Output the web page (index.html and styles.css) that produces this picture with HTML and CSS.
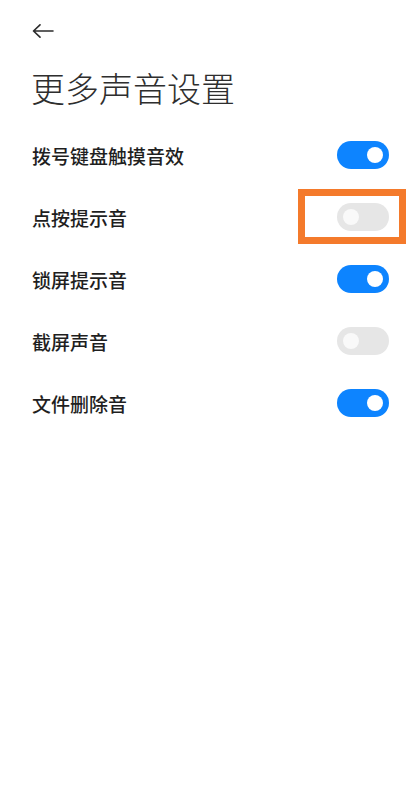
FILE: index.html
```html
<!DOCTYPE html>
<html lang="zh-CN">
<head>
<meta charset="utf-8">
<link rel="stylesheet" href="styles.css">
</head>
<body>
<div class="page">
  <div class="topbar">
    <svg class="back" width="22" height="14" viewBox="0 0 22 14" aria-hidden="true">
      <path d="M21 7H1.5M8 0.8L1.5 7L8 13.2" fill="none" stroke="#2b2b2b" stroke-width="1.6" stroke-linecap="round" stroke-linejoin="round"/>
    </svg>
  </div>
  <h1 class="title">更多声音设置</h1>
  <ul class="list">
    <li class="row"><span class="label">拨号键盘触摸音效</span><span class="toggle on"><span class="knob"></span></span></li>
    <li class="row"><span class="label">点按提示音</span><span class="toggle off"><span class="knob"></span><span class="highlight"></span></span></li>
    <li class="row"><span class="label">锁屏提示音</span><span class="toggle on"><span class="knob"></span></span></li>
    <li class="row"><span class="label">截屏声音</span><span class="toggle off"><span class="knob"></span></span></li>
    <li class="row"><span class="label">文件删除音</span><span class="toggle on"><span class="knob"></span></span></li>
  </ul>
</div>
</body>
</html>
```
FILE: styles.css
```css
* { box-sizing: border-box; }
html, body { margin: 0; padding: 0; background: #ffffff; }
body {
  font-family: "Noto Sans CJK SC", "Noto Sans", sans-serif;
  color: #1f1f1f;
}
.page { width: 420px; min-height: 800px; }
.topbar {
  height: 62px;
  display: flex;
  align-items: center;
  padding-left: 32px;
}
.back { display: block; }
.title {
  margin: 0 0 10px 0;
  padding-left: 31px;
  font-size: 34px;
  line-height: 52px;
  font-weight: 300;
  color: #2e2e2e;
}
.list { list-style: none; margin: 0; padding: 0; }
.row {
  height: 62px;
  display: flex;
  align-items: center;
  justify-content: space-between;
  padding: 0 31px 0 32px;
}
.label {
  font-size: 19px;
  font-weight: 500;
  color: #1f1f1f;
}
.toggle {
  position: relative;
  width: 52px;
  height: 28px;
  border-radius: 14px;
  display: flex;
  align-items: center;
  padding: 0 6px;
}
.toggle.on { background: #0d84ff; justify-content: flex-end; }
.toggle.off { background: #e6e6e6; justify-content: flex-start; }
.knob {
  width: 16px;
  height: 16px;
  border-radius: 50%;
}
.toggle.on .knob { background: #ffffff; }
.toggle.off .knob { background: #f9f9f9; }
.highlight {
  position: absolute;
  left: -39px;
  top: -14px;
  width: 108px;
  height: 55px;
  border: 7px solid #f47a2b;
}
```
